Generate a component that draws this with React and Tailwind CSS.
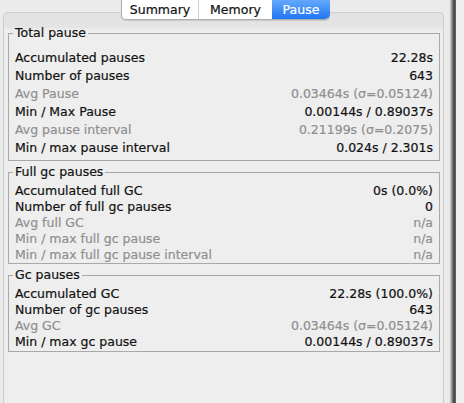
import React from "react";

const totalPause = [
  ["Accumulated pauses", "22.28s", false],
  ["Number of pauses", "643", false],
  ["Avg Pause", "0.03464s (σ=0.05124)", true],
  ["Min / Max Pause", "0.00144s / 0.89037s", false],
  ["Avg pause interval", "0.21199s (σ=0.2075)", true],
  ["Min / max pause interval", "0.024s / 2.301s", false],
];

const fullGc = [
  ["Accumulated full GC", "0s (0.0%)", false],
  ["Number of full gc pauses", "0", false],
  ["Avg full GC", "n/a", true],
  ["Min / max full gc pause", "n/a", true],
  ["Min / max full gc pause interval", "n/a", true],
];

const gcPauses = [
  ["Accumulated GC", "22.28s (100.0%)", false],
  ["Number of gc pauses", "643", false],
  ["Avg GC", "0.03464s (σ=0.05124)", true],
  ["Min / max gc pause", "0.00144s / 0.89037s", false],
];

function Row({ label, value, muted, tall }) {
  return (
    <div
      className={`flex justify-between whitespace-nowrap ${
        tall ? "h-[18px] leading-[18px]" : "h-[16px] leading-[16px]"
      } ${muted ? "text-[#8f8f8f]" : "text-[#111]"}`}
    >
      <span>{label}</span>
      <span>{value}</span>
    </div>
  );
}

function Group({ title, rows, tall, pad }) {
  return (
    <fieldset className={`border border-[#a9a9a9] px-[6px] ${pad}`}>
      <legend className="-ml-[2px] px-[2px] leading-[16px] text-[#111]">
        {title}
      </legend>
      {rows.map(([label, value, muted]) => (
        <Row key={label} label={label} value={value} muted={muted} tall={tall} />
      ))}
    </fieldset>
  );
}

export default function App() {
  return (
    <div className="flex h-[403px] w-[464px] overflow-hidden bg-[#ebebeb] font-['DejaVu_Sans',sans-serif] text-[12.5px] [-webkit-text-stroke:0.2px_currentColor]">
      <div className="flex w-[450px] flex-col">
        {/* tabs */}
        <div className="relative z-10 flex h-[20px] pl-[121px]">
          <div className="flex h-[20px] rounded-b-[5px] border border-t-0 border-[#adadad] bg-white shadow-[0_1px_1px_rgba(0,0,0,0.12)]">
            <div className="w-[77px] border-r border-[#cfcfcf] text-center leading-[19px] text-[#111]">
              Summary
            </div>
            <div className="w-[73px] text-center leading-[19px] text-[#111]">
              Memory
            </div>
            <div className="-mr-px w-[58px] rounded-br-[5px] bg-[linear-gradient(to_bottom,#64a8fb,#1f77f2)] text-center leading-[19px] text-white">
              Pause
            </div>
          </div>
        </div>

        {/* panel */}
        <div className="-mt-[8px] ml-[3px] flex w-[441px] flex-1 flex-col gap-[3px] rounded-t-[5px] border border-b-0 border-[#cdcdcd] bg-[linear-gradient(to_bottom,#e2e2e2,#e4e4e4_14px,#eeeeee_17px,#eeeeee)] pl-[4px] pr-[3px] pt-[12px]">
          <Group title="Total pause" rows={totalPause} tall pad="pt-[8px] pb-[3px]" />
          <Group title="Full gc pauses" rows={fullGc} pad="pt-[3px] pb-0" />
          <Group title="Gc pauses" rows={gcPauses} pad="pt-[3px] pb-[1px]" />
        </div>
      </div>

      {/* window edge */}
      <div className="w-[6px] bg-[linear-gradient(to_right,#d2d2d2,#8f8f8f,#3f3f3f,#6a6a6a)]" />
      <div className="flex-1 bg-[#efefef]" />
    </div>
  );
}
